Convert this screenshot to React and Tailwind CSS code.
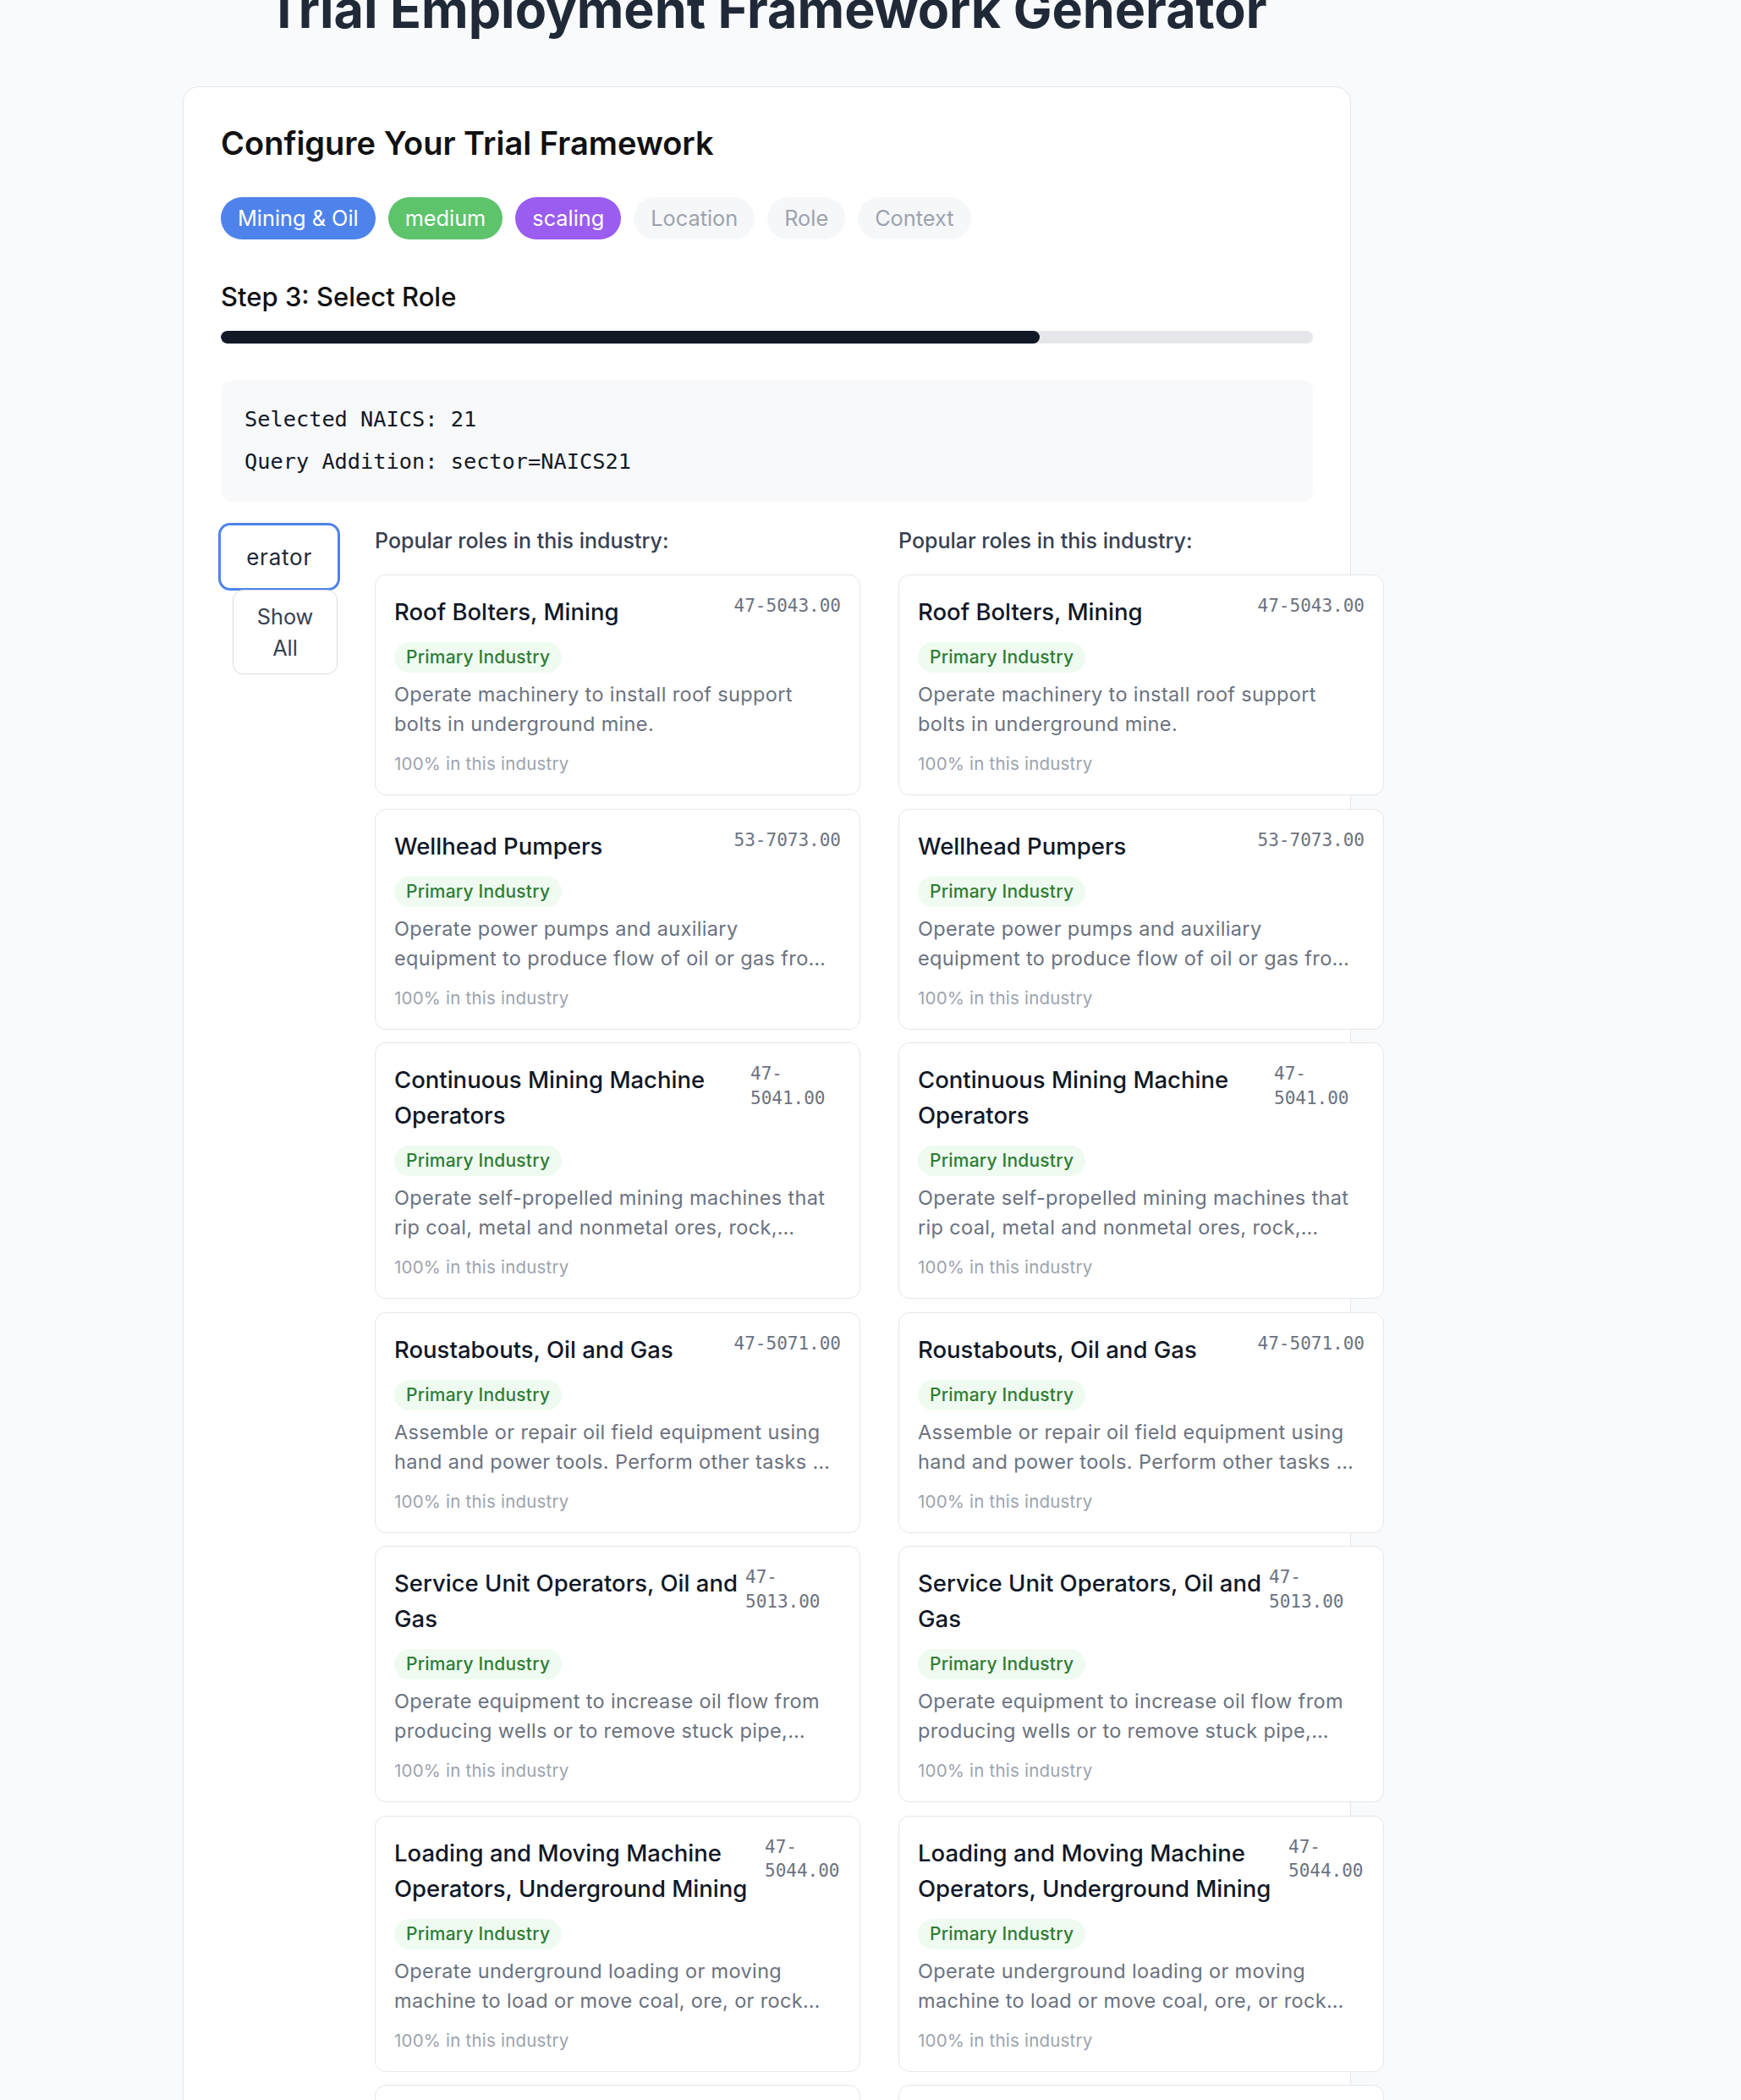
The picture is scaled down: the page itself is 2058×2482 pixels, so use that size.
import React from "react";

const steps = [
  { label: "Mining & Oil", cls: "bg-[#4f83ec] text-white" },
  { label: "medium", cls: "bg-[#5ec46c] text-white" },
  { label: "scaling", cls: "bg-[#9b5cf0] text-white" },
  { label: "Location", cls: "bg-[#f6f7f9] text-[#9ca3af]" },
  { label: "Role", cls: "bg-[#f6f7f9] text-[#9ca3af]" },
  { label: "Context", cls: "bg-[#f6f7f9] text-[#9ca3af]" },
];

const roles = [
  {
    title: ["Roof Bolters, Mining"],
    code: ["47-5043.00"],
    codeCls: "",
    desc: ["Operate machinery to install roof support", "bolts in underground mine."],
  },
  {
    title: ["Wellhead Pumpers"],
    code: ["53-7073.00"],
    codeCls: "",
    desc: ["Operate power pumps and auxiliary", "equipment to produce flow of oil or gas fro…"],
  },
  {
    title: ["Continuous Mining Machine", "Operators"],
    code: ["47-", "5041.00"],
    codeCls: "w-[107px]",
    desc: ["Operate self-propelled mining machines that", "rip coal, metal and nonmetal ores, rock,…"],
  },
  {
    title: ["Roustabouts, Oil and Gas"],
    code: ["47-5071.00"],
    codeCls: "",
    desc: ["Assemble or repair oil field equipment using", "hand and power tools. Perform other tasks …"],
  },
  {
    title: ["Service Unit Operators, Oil and", "Gas"],
    code: ["47-", "5013.00"],
    codeCls: "w-[113px]",
    desc: ["Operate equipment to increase oil flow from", "producing wells or to remove stuck pipe,…"],
  },
  {
    title: ["Loading and Moving Machine", "Operators, Underground Mining"],
    code: ["47-", "5044.00"],
    codeCls: "w-[90px]",
    desc: ["Operate underground loading or moving", "machine to load or move coal, ore, or rock…"],
  },
  {
    title: ["Rotary Drill Operators, Oil and Gas"],
    code: ["47-5012.00"],
    codeCls: "",
    desc: ["Set up or operate a variety of drills to", "remove underground oil and gas, or remove…"],
  },
];

function RoleCard({ role }) {
  return (
    <div className="rounded-[13px] border border-[#e5e7eb] bg-white p-[22px]">
      <div className="flex items-start justify-between gap-[4px]">
        <div className="min-w-0 flex-1 text-[27.5px] font-medium leading-[42px] text-[#111827]">
          {role.title.map((t) => (
            <div key={t} className="whitespace-nowrap">{t}</div>
          ))}
        </div>
        <div
          className={`shrink-0 font-['DejaVu_Sans_Mono',monospace] text-[21px] leading-[28.5px] text-[#6b7280] ${role.codeCls}`}
        >
          {role.code.map((c) => (
            <div key={c} className="whitespace-nowrap">{c}</div>
          ))}
        </div>
      </div>
      <span className="mt-[15px] inline-block h-[36px] rounded-full bg-[#effbf1] px-[14px] text-[21px] font-medium leading-[36px] tracking-[0.01em] text-[#2f7d34]">
        Primary Industry
      </span>
      <div className="mt-[8px] text-[23.5px] leading-[35px] tracking-[0.015em] text-[#6b7280]">
        {role.desc.map((d) => (
          <div key={d} className="whitespace-nowrap">{d}</div>
        ))}
      </div>
      <div className="mt-[16px] text-[20.5px] leading-[28px] tracking-[0.01em] text-[#9ca3af]">
        100% in this industry
      </div>
    </div>
  );
}

function RoleColumn() {
  return (
    <div className="w-[574px] shrink-0">
      <div className="text-[25px] font-medium leading-[36px] text-[#374151]">
        Popular roles in this industry:
      </div>
      <div className="mt-[22px] flex flex-col gap-[15.5px]">
        {roles.map((r) => (
          <RoleCard key={r.title.join(" ")} role={r} />
        ))}
      </div>
    </div>
  );
}

export default function App() {
  return (
    <div className="h-[2482px] overflow-hidden bg-[#f9fafb] font-['Inter',sans-serif]">
      <div className="ml-[216px] w-[1381px]">
        <h1 className="-mt-[25px] text-center text-[61px] font-bold leading-[72px] text-[#1f2937]">
          Trial Employment Framework Generator
        </h1>

        <div className="mt-[55px] rounded-[19px] border border-[#e5e7eb] bg-white px-[44px] pb-[60px] pt-[41px] shadow-[0_1px_2px_rgba(0,0,0,0.03)]">
          <h2 className="text-[38px] font-semibold leading-[50px] text-[#111111]">
            Configure Your Trial Framework
          </h2>

          <div className="mt-[39px] flex gap-[15px]">
            {steps.map((s) => (
              <span
                key={s.label}
                className={`flex h-[50px] items-center rounded-full px-[20px] text-[25.3px] ${s.cls}`}
              >
                {s.label}
              </span>
            ))}
          </div>

          <h3 className="mt-[46px] text-[31px] font-medium leading-[44px] text-[#111111]">
            Step 3: Select Role
          </h3>

          <div className="mt-[18px] h-[15px] w-full overflow-hidden rounded-full bg-[#e5e7eb]">
            <div className="h-full w-3/4 rounded-full bg-[#111827]" />
          </div>

          <div className="mt-[43px] rounded-[13px] bg-[#f8f9fa] px-[28px] py-[28px] font-['DejaVu_Sans_Mono',monospace] text-[25.3px] leading-[38px] text-[#111827]">
            <p>Selected NAICS: 21</p>
            <p className="mt-[12px]">Query Addition: sector=NAICS21</p>
          </div>

          <div className="mt-[28px] flex items-start gap-[44px]">
            <div className="flex w-[138px] shrink-0 flex-col items-end">
              <div className="flex h-[74px] w-[138px] items-center rounded-[11px] bg-white pl-[30px] pr-[30px] text-[26px] tracking-[0.03em] text-[#1f2937] ring-[3px] ring-[#4f83ec]">
                <div className="flex flex-1 justify-end overflow-hidden">
                  <span className="whitespace-nowrap">Operator</span>
                </div>
              </div>
              <button className="mt-[2px] w-[124px] rounded-[12px] border border-[#d9dce1] bg-white px-[20px] py-[12px] text-center text-[25.3px] leading-[37px] text-[#374151]">
                Show All
              </button>
            </div>

            <div className="flex gap-[45px]">
              <RoleColumn />
              <RoleColumn />
            </div>
          </div>
        </div>
      </div>
    </div>
  );
}
